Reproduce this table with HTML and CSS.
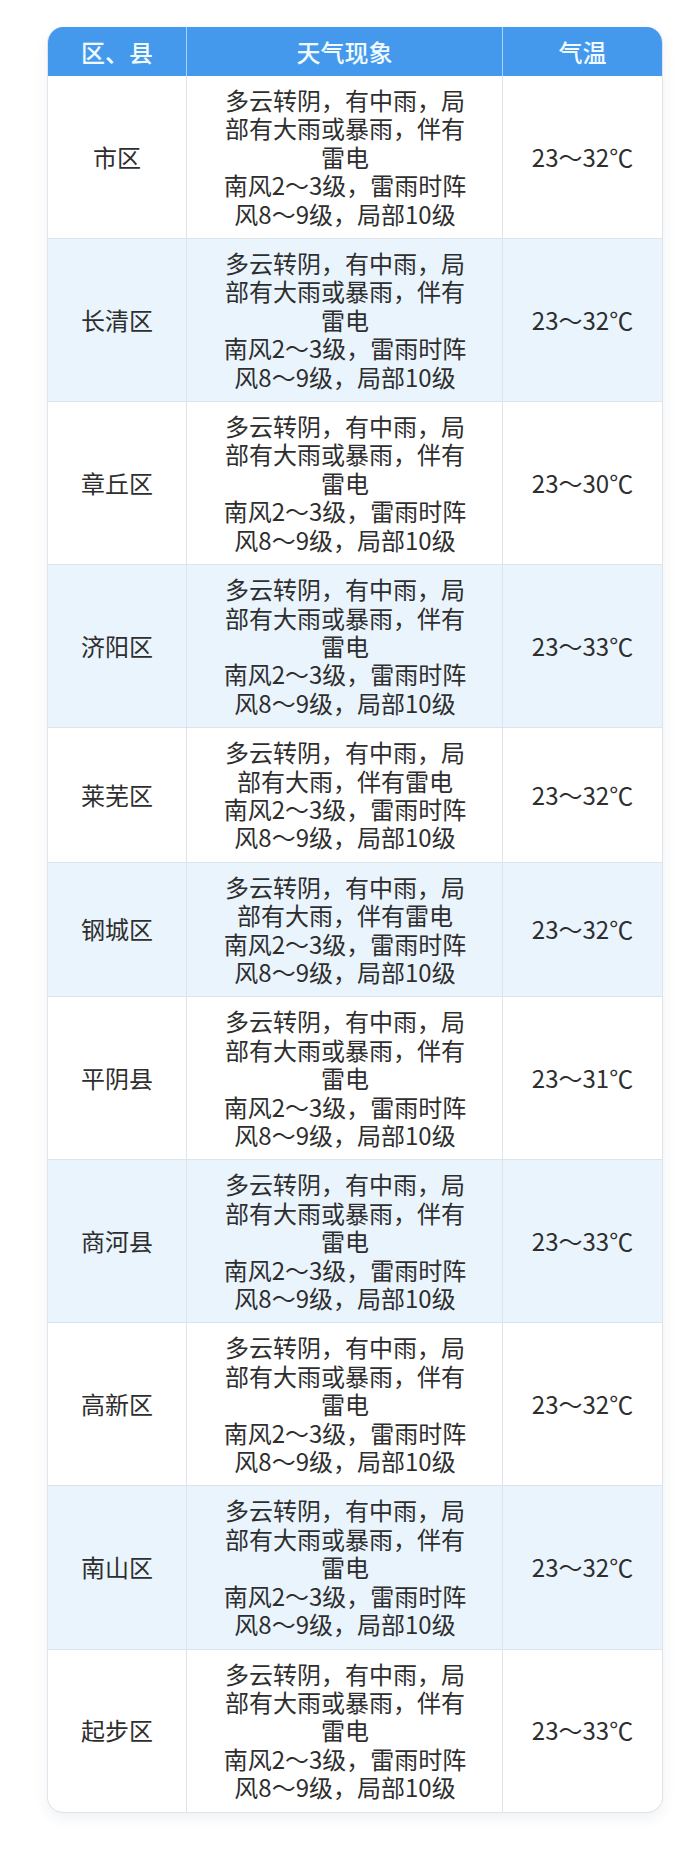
FILE: index.html
```html
<!DOCTYPE html>
<html lang="zh-CN">
<head>
<meta charset="utf-8">
<title>天气预报</title>
<link rel="stylesheet" href="styles.css">
</head>
<body>
<div class="card">
<table class="forecast">
<colgroup><col class="c1"><col class="c2"><col class="c3"></colgroup>
<thead>
<tr><th>区、县</th><th>天气现象</th><th>气温</th></tr>
</thead>
<tbody>
<tr><td>市区</td><td class="wx">多云转阴，有中雨，局部有大雨或暴雨，伴有雷电<br>南风2～3级，雷雨时阵风8～9级，局部10级</td><td>23～32℃</td></tr>
<tr><td>长清区</td><td class="wx">多云转阴，有中雨，局部有大雨或暴雨，伴有雷电<br>南风2～3级，雷雨时阵风8～9级，局部10级</td><td>23～32℃</td></tr>
<tr><td>章丘区</td><td class="wx">多云转阴，有中雨，局部有大雨或暴雨，伴有雷电<br>南风2～3级，雷雨时阵风8～9级，局部10级</td><td>23～30℃</td></tr>
<tr><td>济阳区</td><td class="wx">多云转阴，有中雨，局部有大雨或暴雨，伴有雷电<br>南风2～3级，雷雨时阵风8～9级，局部10级</td><td>23～33℃</td></tr>
<tr><td>莱芜区</td><td class="wx">多云转阴，有中雨，局部有大雨，伴有雷电<br>南风2～3级，雷雨时阵风8～9级，局部10级</td><td>23～32℃</td></tr>
<tr><td>钢城区</td><td class="wx">多云转阴，有中雨，局部有大雨，伴有雷电<br>南风2～3级，雷雨时阵风8～9级，局部10级</td><td>23～32℃</td></tr>
<tr><td>平阴县</td><td class="wx">多云转阴，有中雨，局部有大雨或暴雨，伴有雷电<br>南风2～3级，雷雨时阵风8～9级，局部10级</td><td>23～31℃</td></tr>
<tr><td>商河县</td><td class="wx">多云转阴，有中雨，局部有大雨或暴雨，伴有雷电<br>南风2～3级，雷雨时阵风8～9级，局部10级</td><td>23～33℃</td></tr>
<tr><td>高新区</td><td class="wx">多云转阴，有中雨，局部有大雨或暴雨，伴有雷电<br>南风2～3级，雷雨时阵风8～9级，局部10级</td><td>23～32℃</td></tr>
<tr><td>南山区</td><td class="wx">多云转阴，有中雨，局部有大雨或暴雨，伴有雷电<br>南风2～3级，雷雨时阵风8～9级，局部10级</td><td>23～32℃</td></tr>
<tr><td>起步区</td><td class="wx">多云转阴，有中雨，局部有大雨或暴雨，伴有雷电<br>南风2～3级，雷雨时阵风8～9级，局部10级</td><td>23～33℃</td></tr>
</tbody>
</table>
</div>
</body>
</html>
```
FILE: styles.css
```css
html, body {
  margin: 0;
  padding: 0;
  background: #ffffff;
}
body {
  font-family: "Noto Sans CJK SC", "Noto Sans", sans-serif;
  color: #2e2e2e;
  padding: 27px 26px 39px 47px;
}
.card {
  width: 616px;
  box-sizing: border-box;
  border: 1px solid #dde5ec;
  border-top: none;
  border-radius: 16px;
  overflow: hidden;
  box-shadow: 0 5px 14px rgba(40, 60, 90, 0.07);
  background: #ffffff;
}
.forecast {
  width: 100%;
  border-collapse: separate;
  border-spacing: 0;
  table-layout: fixed;
  font-size: 24px;
}
.c1 { width: 139px; }
.c2 { width: 316px; }
.c3 { width: auto; }
.forecast th {
  background: #4499ec;
  color: #f0faff;
  font-weight: 500;
  line-height: 29px;
  padding: 10px 0;
  text-align: center;
  border-right: 1px solid #a9d3f7;
}
.forecast th:last-child,
.forecast td:last-child {
  border-right: none;
}
.forecast td {
  text-align: center;
  vertical-align: middle;
  line-height: 28.4px;
  padding: 10px 0;
  border-right: 1px solid #dde5ec;
  border-bottom: 1px solid #dde5ec;
}
.forecast tbody tr:last-child td {
  border-bottom: none;
}
.forecast td.wx {
  padding-left: 33px;
  padding-right: 32px;
}
.forecast tbody tr:nth-child(even) td {
  background: #eaf4fd;
}
```
